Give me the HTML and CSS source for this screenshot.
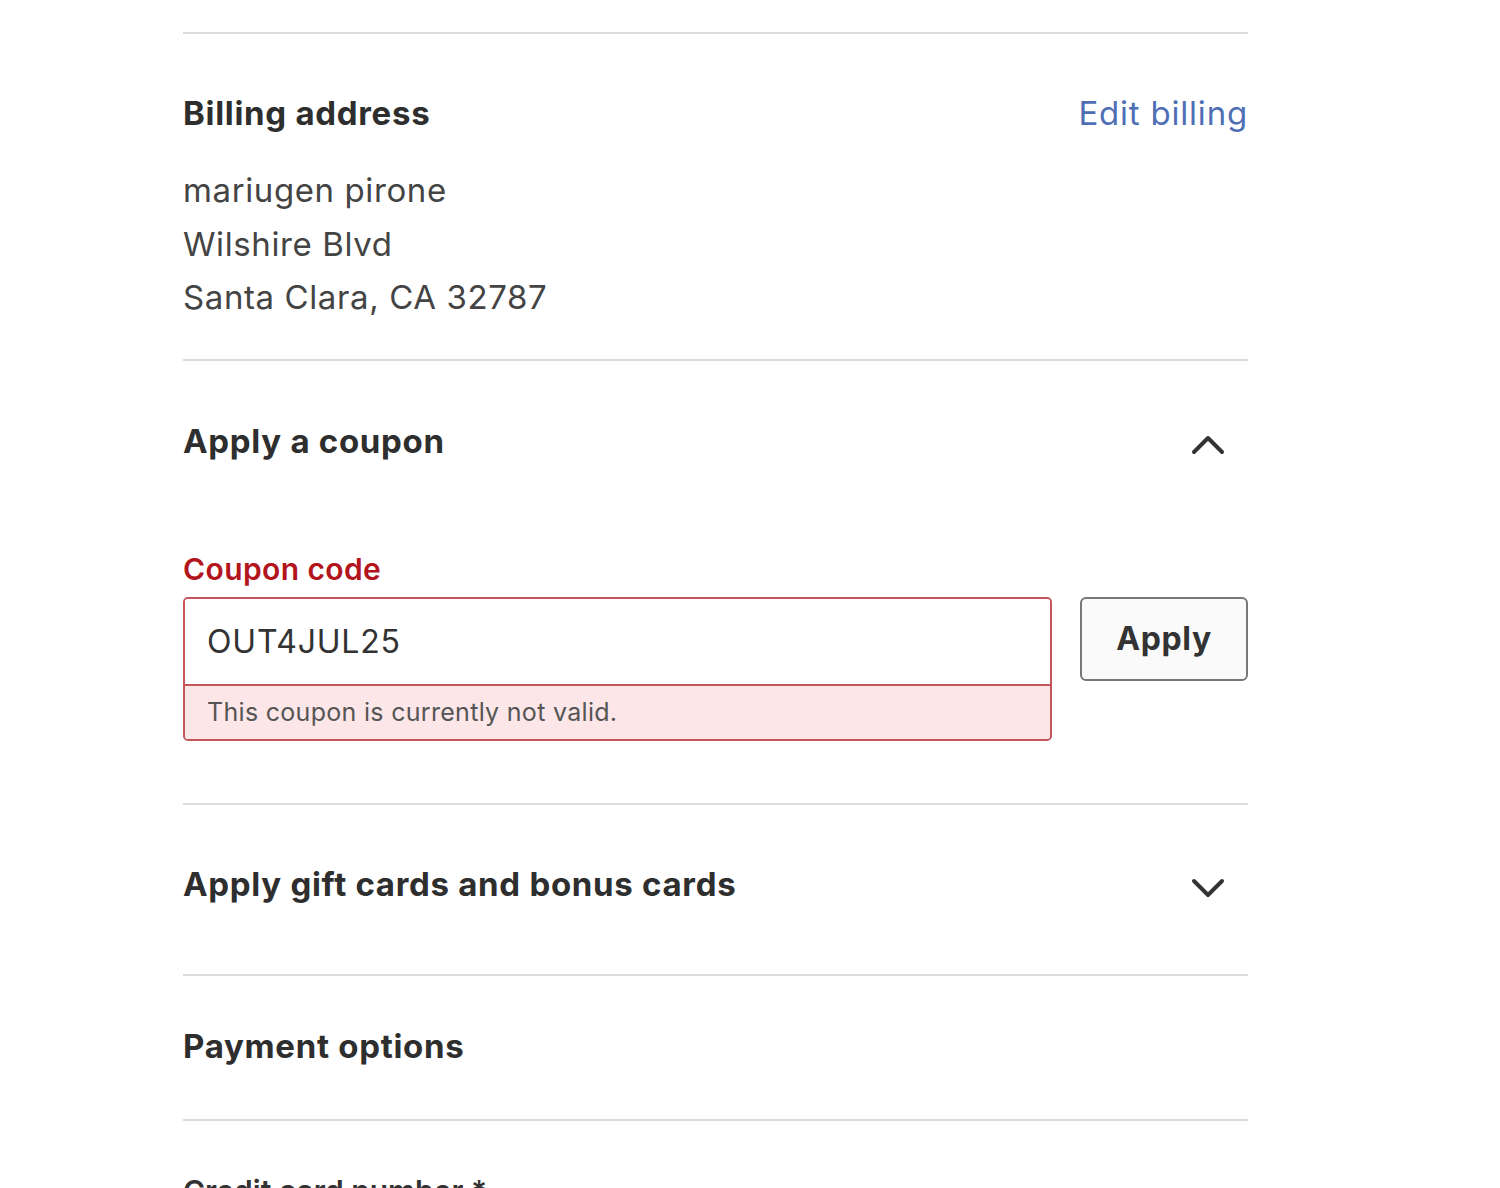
FILE: index.html
```html
<!DOCTYPE html>
<html lang="en">
<head>
    <meta charset="UTF-8">
    <title>Checkout</title>
    <link rel="stylesheet" href="styles.css">
</head>
<body>
    <div class="checkout">
        <!-- Billing -->
        <section class="section billing">
            <div class="section-head">
                <h2 class="section-title">Billing address</h2>
                <a class="edit-link" href="#">Edit billing</a>
            </div>
            <div class="address">
                <div>mariugen pirone</div>
                <div>Wilshire Blvd</div>
                <div>Santa Clara, CA 32787</div>
            </div>
        </section>

        <!-- Coupon -->
        <section class="section coupon">
            <div class="section-head">
                <h2 class="section-title">Apply a coupon</h2>
                <span class="chevron">
                    <svg width="34" height="22" viewBox="0 0 34 22"><path d="M3 19 L17 5 L31 19" fill="none" stroke="#333" stroke-width="4" stroke-linecap="round" stroke-linejoin="round"/></svg>
                </span>
            </div>
            <label class="coupon-label" for="couponCode">Coupon code</label>
            <div class="coupon-row">
                <div class="coupon-field">
                    <input type="text" id="couponCode" class="coupon-input" value="OUT4JUL25">
                    <div class="coupon-error">This coupon is currently not valid.</div>
                </div>
                <button class="apply-btn">Apply</button>
            </div>
        </section>

        <!-- Gift cards -->
        <section class="section gift">
            <div class="section-head">
                <h2 class="section-title">Apply gift cards and bonus cards</h2>
                <span class="chevron down">
                    <svg width="34" height="22" viewBox="0 0 34 22"><path d="M3 3 L17 17 L31 3" fill="none" stroke="#333" stroke-width="4" stroke-linecap="round" stroke-linejoin="round"/></svg>
                </span>
            </div>
        </section>

        <!-- Payment -->
        <section class="section payment">
            <h2 class="section-title">Payment options</h2>
        </section>

        <section class="section card">
            <div class="card-label">Credit card number <span class="req">*</span></div>
        </section>
    </div>
</body>
</html>
```

FILE: styles.css
```css
body {
    margin: 0;
    background: #fff;
    font-family: Inter, "Liberation Sans", sans-serif;
    color: #333;
}
.checkout {
    width: 1065px;
    margin-left: 183px;
    padding-top: 32px;
}
.section {
    border-top: 2px solid #dcdcdc;
}
.section-head {
    display: flex;
    justify-content: space-between;
    align-items: center;
}
.section-title {
    margin: 0;
    font-size: 33px;
    line-height: 40px;
    font-weight: 700;
    color: #2e2e2e;
    letter-spacing: 0.7px;
}
.edit-link {
    font-size: 33px;
    line-height: 40px;
    color: #4f6fb5;
    text-decoration: none;
    letter-spacing: 0.8px;
}

/* Billing */
.billing {
    padding: 59px 0 34px;
}
.address {
    margin-top: 31px;
    font-size: 33px;
    line-height: 53.5px;
    color: #444;
    letter-spacing: 0.6px;
}

/* Coupon */
.coupon {
    padding: 60px 0 62px;
}
.chevron {
    display: flex;
    margin-right: 23px;
    padding-top: 6px;
}
.chevron.down {
    padding-top: 10px;
}
.coupon-label {
    display: block;
    margin-top: 90px;
    font-size: 30px;
    line-height: 36px;
    font-weight: 600;
    color: #b3151d;
    letter-spacing: 0.4px;
}
.coupon-row {
    display: flex;
    align-items: flex-start;
    gap: 28px;
    margin-top: 10px;
}
.coupon-field {
    flex: 1;
    border: 2px solid #c4565a;
    border-radius: 5px;
    overflow: hidden;
}
.coupon-input {
    display: block;
    box-sizing: border-box;
    width: 100%;
    height: 87px;
    border: none;
    border-bottom: 2px solid #c4565a;
    padding: 0 22px;
    font-family: inherit;
    font-size: 32px;
    letter-spacing: 0.8px;
    color: #333;
    outline: none;
}
.coupon-error {
    height: 53px;
    line-height: 53px;
    padding: 0 22px;
    background: #fce6e7;
    font-size: 25px;
    letter-spacing: 0.3px;
    color: #555;
}
.apply-btn {
    width: 168px;
    height: 84px;
    border: 2px solid #777;
    border-radius: 6px;
    background: #fafafa;
    font-family: inherit;
    font-size: 32px;
    font-weight: 700;
    letter-spacing: 0.6px;
    color: #333;
    cursor: pointer;
}

/* Gift / Payment */
.gift {
    padding: 59px 0 70px;
}
.payment {
    padding: 50px 0 53px;
}
.card {
    padding-top: 52px;
}
.card-label {
    font-size: 30px;
    line-height: 36px;
    font-weight: 600;
    color: #333;
}
.req {
    color: #333;
}
```
